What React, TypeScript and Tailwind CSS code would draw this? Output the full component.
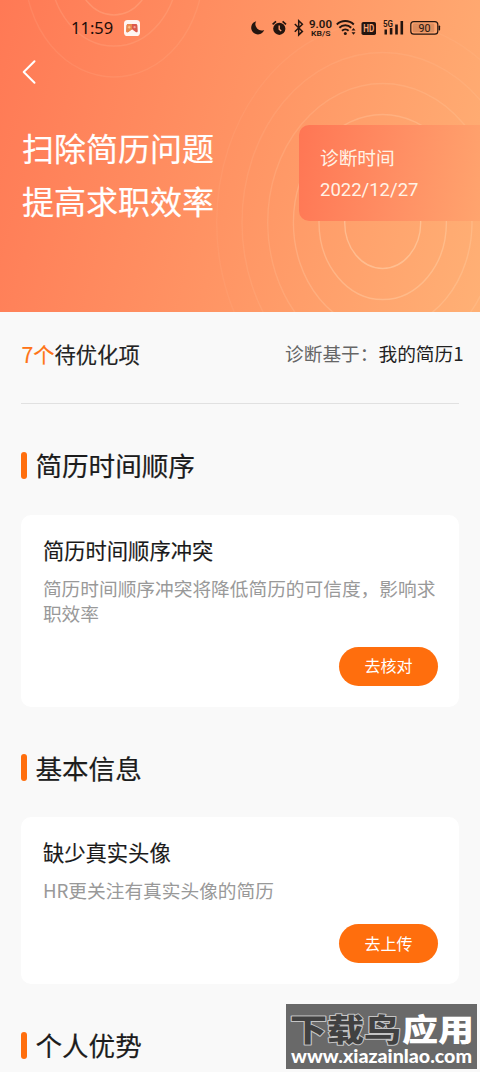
import React from 'react'

type Issue = {
  title: string
  desc: string
  action: string
}

type Section = {
  name: string
  issue?: Issue
}

const sections: Section[] = [
  {
    name: '简历时间顺序',
    issue: {
      title: '简历时间顺序冲突',
      desc: '简历时间顺序冲突将降低简历的可信度，影响求职效率',
      action: '去核对'
    }
  },
  {
    name: '基本信息',
    issue: {
      title: '缺少真实头像',
      desc: 'HR更关注有真实头像的简历',
      action: '去上传'
    }
  },
  { name: '个人优势' }
]

const rings = [
  { rx: 38, ry: 46, opacity: 0.4 },
  { rx: 63.7, ry: 77, opacity: 0.3 },
  { rx: 89.3, ry: 108, opacity: 0.22 },
  { rx: 115, ry: 139, opacity: 0.15 },
  { rx: 140.7, ry: 170, opacity: 0.1 },
  { rx: 166, ry: 201, opacity: 0.07 }
]

function HeroRings() {
  return (
    <svg className="absolute inset-0" width="480" height="312" viewBox="0 0 480 312" fill="none" stroke="#ffe3c4" strokeWidth="1.4">
      {rings.map((r) => (
        <ellipse key={r.rx} cx="382.7" cy="222.5" rx={r.rx} ry={r.ry} strokeOpacity={r.opacity} />
      ))}
      {rings.slice(0, 3).map((r) => (
        <ellipse key={r.rx} cx="114" cy="-31" rx={r.rx} ry={r.ry} strokeOpacity={r.opacity * 0.45} />
      ))}
    </svg>
  )
}

function StatusBar() {
  return (
    <div className="flex h-14 items-center pl-[71px] text-[#24150f]">
      <span className="w-[53px] whitespace-nowrap font-['Noto_Sans'] text-[16.5px] leading-none text-[#1c0c08]">11:59</span>
      {/* Game mode badge */}
      <svg width="16" height="16" viewBox="0 0 16 16">
        <rect width="16" height="16" rx="3.6" fill="#fff6f2" />
        <path d="M4.2 4h7.6c1 0 1.500.6 1.600 1.500l.3 5.200c.1 1.500-1 1.900-2 1.200L8 9.200l-3.700 2.700c-1 .7-2.100.3-2-1.200l.3-5.200C2.700 4.600 3.200 4 4.200 4z" fill="#dc5a4c" />
        <path d="M4.200 4H8v5.200l-3.700 2.700c-1 .7-2.100.3-2-1.200l.3-5.200C2.700 4.600 3.200 4 4.200 4z" fill="#e88a4c" />
        <path d="M3.800 7.200h2.800M5.200 5.800v2.800" stroke="#ffcf9a" strokeWidth="0.900" />
        <circle cx="10.600" cy="7.200" r="1.100" fill="#f5a79a" />
      </svg>
      <svg className="ml-[104px]" width="200" height="28" viewBox="244 14 200 28" fill="currentColor">
        {/* Do not disturb */}
        <path d="M256.200 21.200a6.700 6.700 0 1 0 8 8.800a6.300 6.300 0 0 1-8-8.800z" />
        {/* Alarm */}
        <circle cx="279.300" cy="28.800" r="6.100" />
        <path d="M272.600 24.300l3.400-2.900M286 24.300l-3.400-2.900" stroke="currentColor" strokeWidth="1.700" />
        <path d="M279.200 25.600v3.600l2 1.900" fill="none" stroke="#ff9a6b" strokeWidth="1.400" />
        {/* Bluetooth */}
        <path d="M294.800 24l7.600 7.400-3.700 3.500V20.800l3.700 3.500-7.600 7.400" fill="none" stroke="currentColor" strokeWidth="1.500" />
        {/* Network speed */}
        <text x="309" y="28" textLength="23" lengthAdjust="spacingAndGlyphs" fontFamily="Roboto, sans-serif" fontSize="10.800" fontWeight="600">9.00</text>
        <text x="311" y="36.200" textLength="19.500" lengthAdjust="spacingAndGlyphs" fontFamily="Roboto, sans-serif" fontSize="7.600" fontWeight="600">KB/S</text>
        {/* Wifi */}
        <g fill="none" stroke="currentColor" strokeWidth="1.900">
          <path d="M336.800 24.500a12.200 12.200 0 0 1 17 0" />
          <path d="M339.400 27.700a8.400 8.400 0 0 1 11.800 0" />
          <path d="M342 30.800a4.800 4.800 0 0 1 6.600 0" />
        </g>
        <circle cx="345.300" cy="33.600" r="1.500" />
        <path d="M353.500 28l2 2.600h-4zM353.500 34.800l2-2.600h-4z" />
        {/* HD */}
        <rect x="361.500" y="22" width="14.500" height="13" rx="1.800" />
        <text x="363.200" y="32.300" textLength="11" lengthAdjust="spacingAndGlyphs" fontFamily="Roboto, sans-serif" fontSize="10" fontWeight="600" fill="#ffa878">HD</text>
        {/* 5G signal */}
        <text x="383" y="27" textLength="10" lengthAdjust="spacingAndGlyphs" fontFamily="Roboto, sans-serif" fontSize="9.200" fontWeight="600">5G</text>
        <path d="M384.500 29.500h2.500v5h-2.500zM389.800 28h2.600v6.500h-2.600zM395.200 24.500h2.600v10h-2.600zM400.500 21h2.600v13.500h-2.600z" />
        {/* Battery */}
        <rect x="410.800" y="21.600" width="27" height="12.600" rx="3" fill="none" stroke="currentColor" strokeWidth="1.200" />
        <rect x="412.800" y="23.500" width="21.500" height="8.800" rx="1.500" fillOpacity="0.150" />
        <rect x="438.600" y="25.500" width="1.500" height="5" rx="0.700" />
        <text x="418.500" y="31.800" textLength="12" lengthAdjust="spacingAndGlyphs" fontFamily="Roboto, sans-serif" fontSize="10.500">90</text>
      </svg>
    </div>
  )
}

function Hero() {
  return (
    <header className="relative h-[312px] overflow-hidden bg-[linear-gradient(105deg,#ff7955_0%,#ff9464_50%,#ffb075_100%)] text-white">
      <HeroRings />
      <div className="relative">
        <StatusBar />
        <button className="ml-[21px] mt-[3px] block" aria-label="返回">
          <svg width="16" height="26" viewBox="0 0 16 26" fill="none" stroke="currentColor" strokeWidth="2" strokeLinecap="round" strokeLinejoin="round">
            <path d="M13.500 2.200L2.700 13l10.800 10.800" />
          </svg>
        </button>
        <div className="mt-9 flex items-start justify-between pl-[22px]">
          <h1 className="text-[32px] leading-[53px] [-webkit-text-stroke:0.2px]">
            扫除简历问题
            <br />
            提高求职效率
          </h1>
          <div className="mt-1 h-24 w-[181px] rounded-l-[10px] bg-[linear-gradient(100deg,#ff7654_0%,#ff8f64_55%,#ffa46e_100%)] pl-[21px] pt-[15px] text-[18.7px] leading-[33px] text-[#fff3e6]">
            <p>诊断时间</p>
            <p className="pt-px font-['Roboto'] text-[18.5px]">2022/12/27</p>
          </div>
        </div>
      </div>
    </header>
  )
}

function IssueCard({ issue }: { issue: Issue }) {
  return (
    <div className="mt-[29.7px] rounded-[10px] bg-white px-[21.5px] pb-[21px] pt-[19px]">
      <h3 className="text-[21.3px] leading-8 text-[#1a1a1a] [-webkit-text-stroke:0.15px]">{issue.title}</h3>
      <p className="mt-[9px] text-[18.7px] leading-[25px] text-[#999]">{issue.desc}</p>
      <div className="-mr-px mt-[22px] flex justify-end">
        <button className="h-[39px] w-[99px] rounded-full bg-[#ff6e0d] pb-0.5 text-base leading-none text-white">{issue.action}</button>
      </div>
    </div>
  )
}

function Watermark() {
  return (
    <div className="absolute left-[286px] top-[1004px] h-[65px] w-[191px] bg-[#696969]">
      <svg width="191" height="65" viewBox="0 0 191 65" fontWeight="900" strokeLinejoin="round" paintOrder="stroke">
        <g fontFamily="'Noto Sans CJK SC', sans-serif" fontSize="31">
          <text x="4" y="37" textLength="111" lengthAdjust="spacingAndGlyphs" fill="#414141" stroke="#c4c4c4" strokeWidth="2">下载鸟</text>
          <text x="116" y="37" textLength="72" lengthAdjust="spacingAndGlyphs" fill="#fff">应用</text>
        </g>
        <text x="5" y="58.500" textLength="181" lengthAdjust="spacingAndGlyphs" fontFamily="Lato, sans-serif" fontSize="18" fontWeight="900" fill="#fff">www.xiazainlao.com</text>
      </svg>
    </div>
  )
}

export default function App() {
  return (
    <div className="relative h-[1072px] w-[480px] overflow-hidden bg-[#f9f9f9] font-['Noto_Sans_CJK_SC',sans-serif]">
      <Hero />
      <main className="px-[21.4px]">
        <div className="-mr-[5px] flex h-[91px] items-center justify-between pb-2">
          <p className="text-[21.3px] text-[#222] [-webkit-text-stroke:0.15px]">
            <span className="text-[#ff7417]">7个</span>待优化项
          </p>
          <p className="text-[18.7px] text-[#222]">
            <span className="text-[#666]">诊断基于：</span>我的简历1
          </p>
        </div>
        <div className="h-px bg-[#e1e1e1]" />

        {sections.map((section) => (
          <section key={section.name} className="pt-[41px]">
            <h2 className="flex h-10 items-center gap-2 text-[26.6px] text-[#1c1c1c] [-webkit-text-stroke:0.2px]">
              <span className="h-[27px] w-1.5 rounded-full bg-[#ff6e0d]" />
              {section.name}
            </h2>
            {section.issue && <IssueCard issue={section.issue} />}
          </section>
        ))}
      </main>
      <Watermark />
    </div>
  )
}
